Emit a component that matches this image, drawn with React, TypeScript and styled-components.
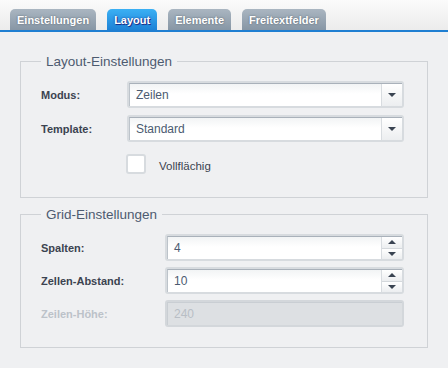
import React from "react";
import styled, { createGlobalStyle } from "styled-components";

const Global = createGlobalStyle`
  html, body { margin: 0; padding: 0; }
  body {
    background: #eff0f2;
    font-family: "Liberation Sans", Arial, sans-serif;
    width: 448px;
    height: 368px;
    overflow: hidden;
  }
`;

const Page = styled.div`
  width: 448px;
  height: 368px;
  display: flex;
  flex-direction: column;
`;

const TabBar = styled.div`
  height: 30px;
  display: flex;
  align-items: flex-end;
  gap: 11px;
  padding-left: 10px;
  background: linear-gradient(#fbfbfb, #ececec);
  border-bottom: 2px solid #1f7fd2;
`;

const Tab = styled.div<{ $active?: boolean }>`
  height: 21px;
  padding: 0 7px;
  display: flex;
  align-items: center;
  border-radius: 5px 5px 0 0;
  font-size: 11px;
  font-weight: bold;
  color: #fff;
  background: ${(p) =>
    p.$active
      ? "linear-gradient(#3bb0f4, #1d82d6)"
      : "linear-gradient(#aab6c1, #8796a5)"};
  text-shadow: ${(p) =>
    p.$active ? "0 0 2px #1b2f8a, 1px 1px 0 #1b3590" : "0 0 2px #55606b"};
`;

const Content = styled.div`
  padding: 0 20px 0 20px;
  display: flex;
  flex-direction: column;
  gap: 9px;
  margin-top: 22px;
`;

const Fieldset = styled.fieldset<{ $labelWidth: number; $bottom: number; $gap: number }>`
  margin: 0;
  border: 1px solid #cfd2d6;
  padding: 12px 23px ${(p) => p.$bottom}px 20px;
  display: grid;
  grid-template-columns: ${(p) => p.$labelWidth}px 1fr;
  row-gap: ${(p) => p.$gap}px;
  align-items: center;
`;

const Legend = styled.legend`
  margin-left: 0;
  padding: 0 5px;
  font-size: 13.5px;
  color: #4d5b70;
`;

const Label = styled.label<{ $disabled?: boolean }>`
  font-size: 11px;
  font-weight: bold;
  color: ${(p) => (p.$disabled ? "#bcc2c9" : "#3b4350")};
`;

const Field = styled.div<{ $disabled?: boolean }>`
  height: 27px;
  box-sizing: border-box;
  padding: 2px;
  border-radius: 3px;
  background: ${(p) => (p.$disabled ? "#d3d7db" : "#d7dbdf")};
  display: flex;
`;

const Inner = styled.div<{ $disabled?: boolean }>`
  flex: 1;
  display: flex;
  align-items: stretch;
  border-top: 1px solid ${(p) => (p.$disabled ? "#c9ced3" : "#a9b1ba")};
  border-left: 1px solid ${(p) => (p.$disabled ? "#c9ced3" : "#bcc3ca")};
  background: ${(p) =>
    p.$disabled ? "#dde0e3" : "linear-gradient(#f2f4f5, #ffffff 45%)"};
`;

const Value = styled.div<{ $disabled?: boolean }>`
  flex: 1;
  display: flex;
  align-items: center;
  padding-left: 6px;
  font-size: 12px;
  color: ${(p) => (p.$disabled ? "#b8bec5" : "#4b5a70")};
`;

const DropButton = styled.div`
  width: 20px;
  border-left: 1px solid #d8dce0;
  background: linear-gradient(#ffffff, #eceef0);
  display: flex;
  align-items: center;
  justify-content: center;
`;

const Spinner = styled.div`
  width: 20px;
  border-left: 1px solid #d8dce0;
  display: flex;
  flex-direction: column;
`;

const SpinHalf = styled.div<{ $top?: boolean }>`
  flex: 1;
  display: flex;
  align-items: center;
  justify-content: center;
  background: linear-gradient(#ffffff, #eceef0);
  border-top: ${(p) => (p.$top ? "none" : "1px solid #d4d8dc")};
`;

const Arrow = styled.div<{ $up?: boolean }>`
  width: 0;
  height: 0;
  border-left: 4px solid transparent;
  border-right: 4px solid transparent;
  ${(p) =>
    p.$up
      ? "border-bottom: 4px solid #3a4452;"
      : "border-top: 4px solid #3a4452;"}
`;

const CheckRow = styled.div`
  grid-column: 2;
  display: flex;
  align-items: center;
  gap: 13px;
  margin-top: 5px;
  margin-left: -1px;
`;

const CheckBox = styled.div`
  width: 20px;
  height: 20px;
  box-sizing: border-box;
  border: 2px solid #d7dbdf;
  border-radius: 3px;
  background: #fff;
`;

const CheckLabel = styled.span`
  font-size: 11.5px;
  color: #3b4350;
  margin-top: 4px;
`;

function Select({ value }: { value: string }) {
  return (
    <Field>
      <Inner>
        <Value>{value}</Value>
        <DropButton>
          <Arrow />
        </DropButton>
      </Inner>
    </Field>
  );
}

function NumberInput({ value, disabled }: { value: string; disabled?: boolean }) {
  return (
    <Field $disabled={disabled}>
      <Inner $disabled={disabled}>
        <Value $disabled={disabled}>{value}</Value>
        {!disabled && (
          <Spinner>
            <SpinHalf $top>
              <Arrow $up />
            </SpinHalf>
            <SpinHalf>
              <Arrow />
            </SpinHalf>
          </Spinner>
        )}
      </Inner>
    </Field>
  );
}

export default function App() {
  return (
    <Page>
      <Global />
      <TabBar>
        <Tab>Einstellungen</Tab>
        <Tab $active>Layout</Tab>
        <Tab>Elemente</Tab>
        <Tab>Freitextfelder</Tab>
      </TabBar>
      <Content>
        <Fieldset $labelWidth={86} $bottom={23} $gap={7}>
          <Legend>Layout-Einstellungen</Legend>
          <Label>Modus:</Label>
          <Select value="Zeilen" />
          <Label>Template:</Label>
          <Select value="Standard" />
          <CheckRow>
            <CheckBox />
            <CheckLabel>Vollflächig</CheckLabel>
          </CheckRow>
        </Fieldset>
        <Fieldset $labelWidth={124} $bottom={20} $gap={6}>
          <Legend>Grid-Einstellungen</Legend>
          <Label>Spalten:</Label>
          <NumberInput value="4" />
          <Label>Zellen-Abstand:</Label>
          <NumberInput value="10" />
          <Label $disabled>Zeilen-Höhe:</Label>
          <NumberInput value="240" disabled />
        </Fieldset>
      </Content>
    </Page>
  );
}
